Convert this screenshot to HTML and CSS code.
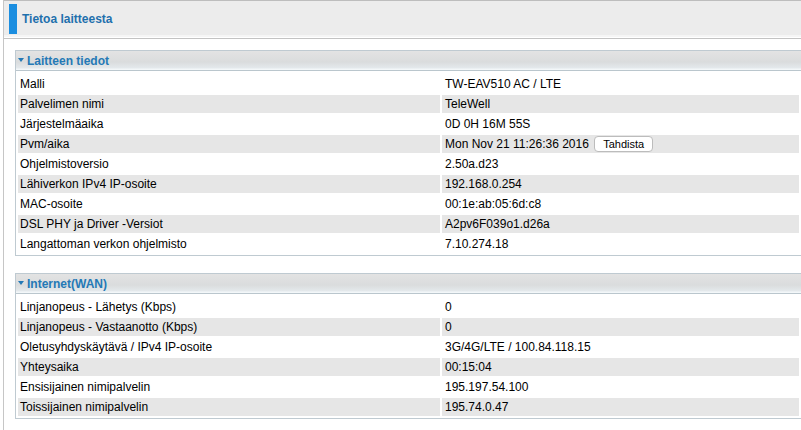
FILE: index.html
```html
<!DOCTYPE html>
<html>
<head>
<meta charset="UTF-8">
<title>Tietoa laitteesta</title>
<link rel="stylesheet" href="styles.css">
</head>
<body>

    <div class="page">
        <div class="title-bar">
            <span class="title-mark"></span>
            <span class="title-text">Tietoa laitteesta</span>
        </div>

        <div class="content">

            <!-- laitteen tiedot -->
            <div class="section">
                <div class="section-head"><span class="arrow"></span>Laitteen tiedot</div>
                <table class="info">
                    <tr><td class="label">Malli</td><td class="value">TW-EAV510 AC / LTE</td></tr>
                    <tr class="alt"><td class="label">Palvelimen nimi</td><td class="value">TeleWell</td></tr>
                    <tr><td class="label">Järjestelmäaika</td><td class="value">0D 0H 16M 55S</td></tr>
                    <tr class="alt"><td class="label">Pvm/aika</td><td class="value">Mon Nov 21 11:26:36 2016 <button type="button" class="sync">Tahdista</button></td></tr>
                    <tr><td class="label">Ohjelmistoversio</td><td class="value">2.50a.d23</td></tr>
                    <tr class="alt"><td class="label">Lähiverkon IPv4 IP-osoite</td><td class="value">192.168.0.254</td></tr>
                    <tr><td class="label">MAC-osoite</td><td class="value">00:1e:ab:05:6d:c8</td></tr>
                    <tr class="alt"><td class="label">DSL PHY ja Driver -Versiot</td><td class="value">A2pv6F039o1.d26a</td></tr>
                    <tr><td class="label">Langattoman verkon ohjelmisto</td><td class="value">7.10.274.18</td></tr>
                </table>
            </div>

            <!-- internet (wan) -->
            <div class="section">
                <div class="section-head"><span class="arrow"></span>Internet(WAN)</div>
                <table class="info">
                    <tr><td class="label">Linjanopeus - Lähetys (Kbps)</td><td class="value">0</td></tr>
                    <tr class="alt"><td class="label">Linjanopeus - Vastaanotto (Kbps)</td><td class="value">0</td></tr>
                    <tr><td class="label">Oletusyhdyskäytävä / IPv4 IP-osoite</td><td class="value">3G/4G/LTE / 100.84.118.15</td></tr>
                    <tr class="alt"><td class="label">Yhteysaika</td><td class="value">00:15:04</td></tr>
                    <tr><td class="label">Ensisijainen nimipalvelin</td><td class="value">195.197.54.100</td></tr>
                    <tr class="alt"><td class="label">Toissijainen nimipalvelin</td><td class="value">195.74.0.47</td></tr>
                </table>
            </div>

        </div>
    </div>

</body>
</html>
```

FILE: styles.css
```css
*{
    box-sizing: border-box;
}

body{
    margin: 0;
    font-family: "Liberation Sans", Arial, sans-serif;
    font-size: 12px;
    color: #000;
    background-color: #fff;
}

.page {
    margin-left: 3px;
    min-height: 430px;
    border-left: 1px solid #c6c6c6;
}

/* title */
.title-bar {
    display: flex;
    align-items: center;
    border-top: 1px solid #bdbdbd;
    border-bottom: 2px solid #f5f5f5;
    background-color: #ececec;
    padding: 3px 0 1px 5px;
}

.title-mark {
    display: block;
    width: 8px;
    height: 30px;
    background-color: #1b8ee0;
}

.title-text {
    margin-left: 5px;
    font-weight: bold;
    color: #1f70ad;
}

.content {
    margin-top: 1px;
    border-top: 1px solid #c3c3c3;
    padding: 11px 0 0 11px;
}

/* sections */
.section {
    border: 1px solid #bfcad1;
    border-right: none;
    margin-bottom: 17px;
}

.section-head {
    display: flex;
    align-items: center;
    height: 20px;
    padding-left: 2px;
    font-weight: bold;
    color: #2479b6;
    background: linear-gradient(#e3e3e3, #dadcdd 55%, #e4e9ec 85%, #f3f7f9 90%, #f3f7f9 95%, #bac6cd 95%);
}

.section-head .arrow {
    width: 0;
    height: 0;
    border-top: 4px solid #2479b6;
    border-left: 3.5px solid transparent;
    border-right: 3.5px solid transparent;
    margin: 0 3px 3px 0;
}

table.info {
    width: 100%;
    border-spacing: 2px;
    margin-top: 2px;
}

table.info td {
    height: 18px;
    padding: 0 0 0 2px;
    white-space: nowrap;
}

table.info td.label {
    width: 422px;
}

table.info td.value {
    padding-left: 3px;
}

table.info tr.alt td {
    background-color: #e6e6e6;
}

button.sync {
    font-family: "Liberation Sans", Arial, sans-serif;
    font-size: 11px;
    height: 16px;
    padding: 0 8px;
    margin-left: 2px;
    background-color: #fff;
    border: 1px solid #bcbcbc;
    border-radius: 4px;
}
```
